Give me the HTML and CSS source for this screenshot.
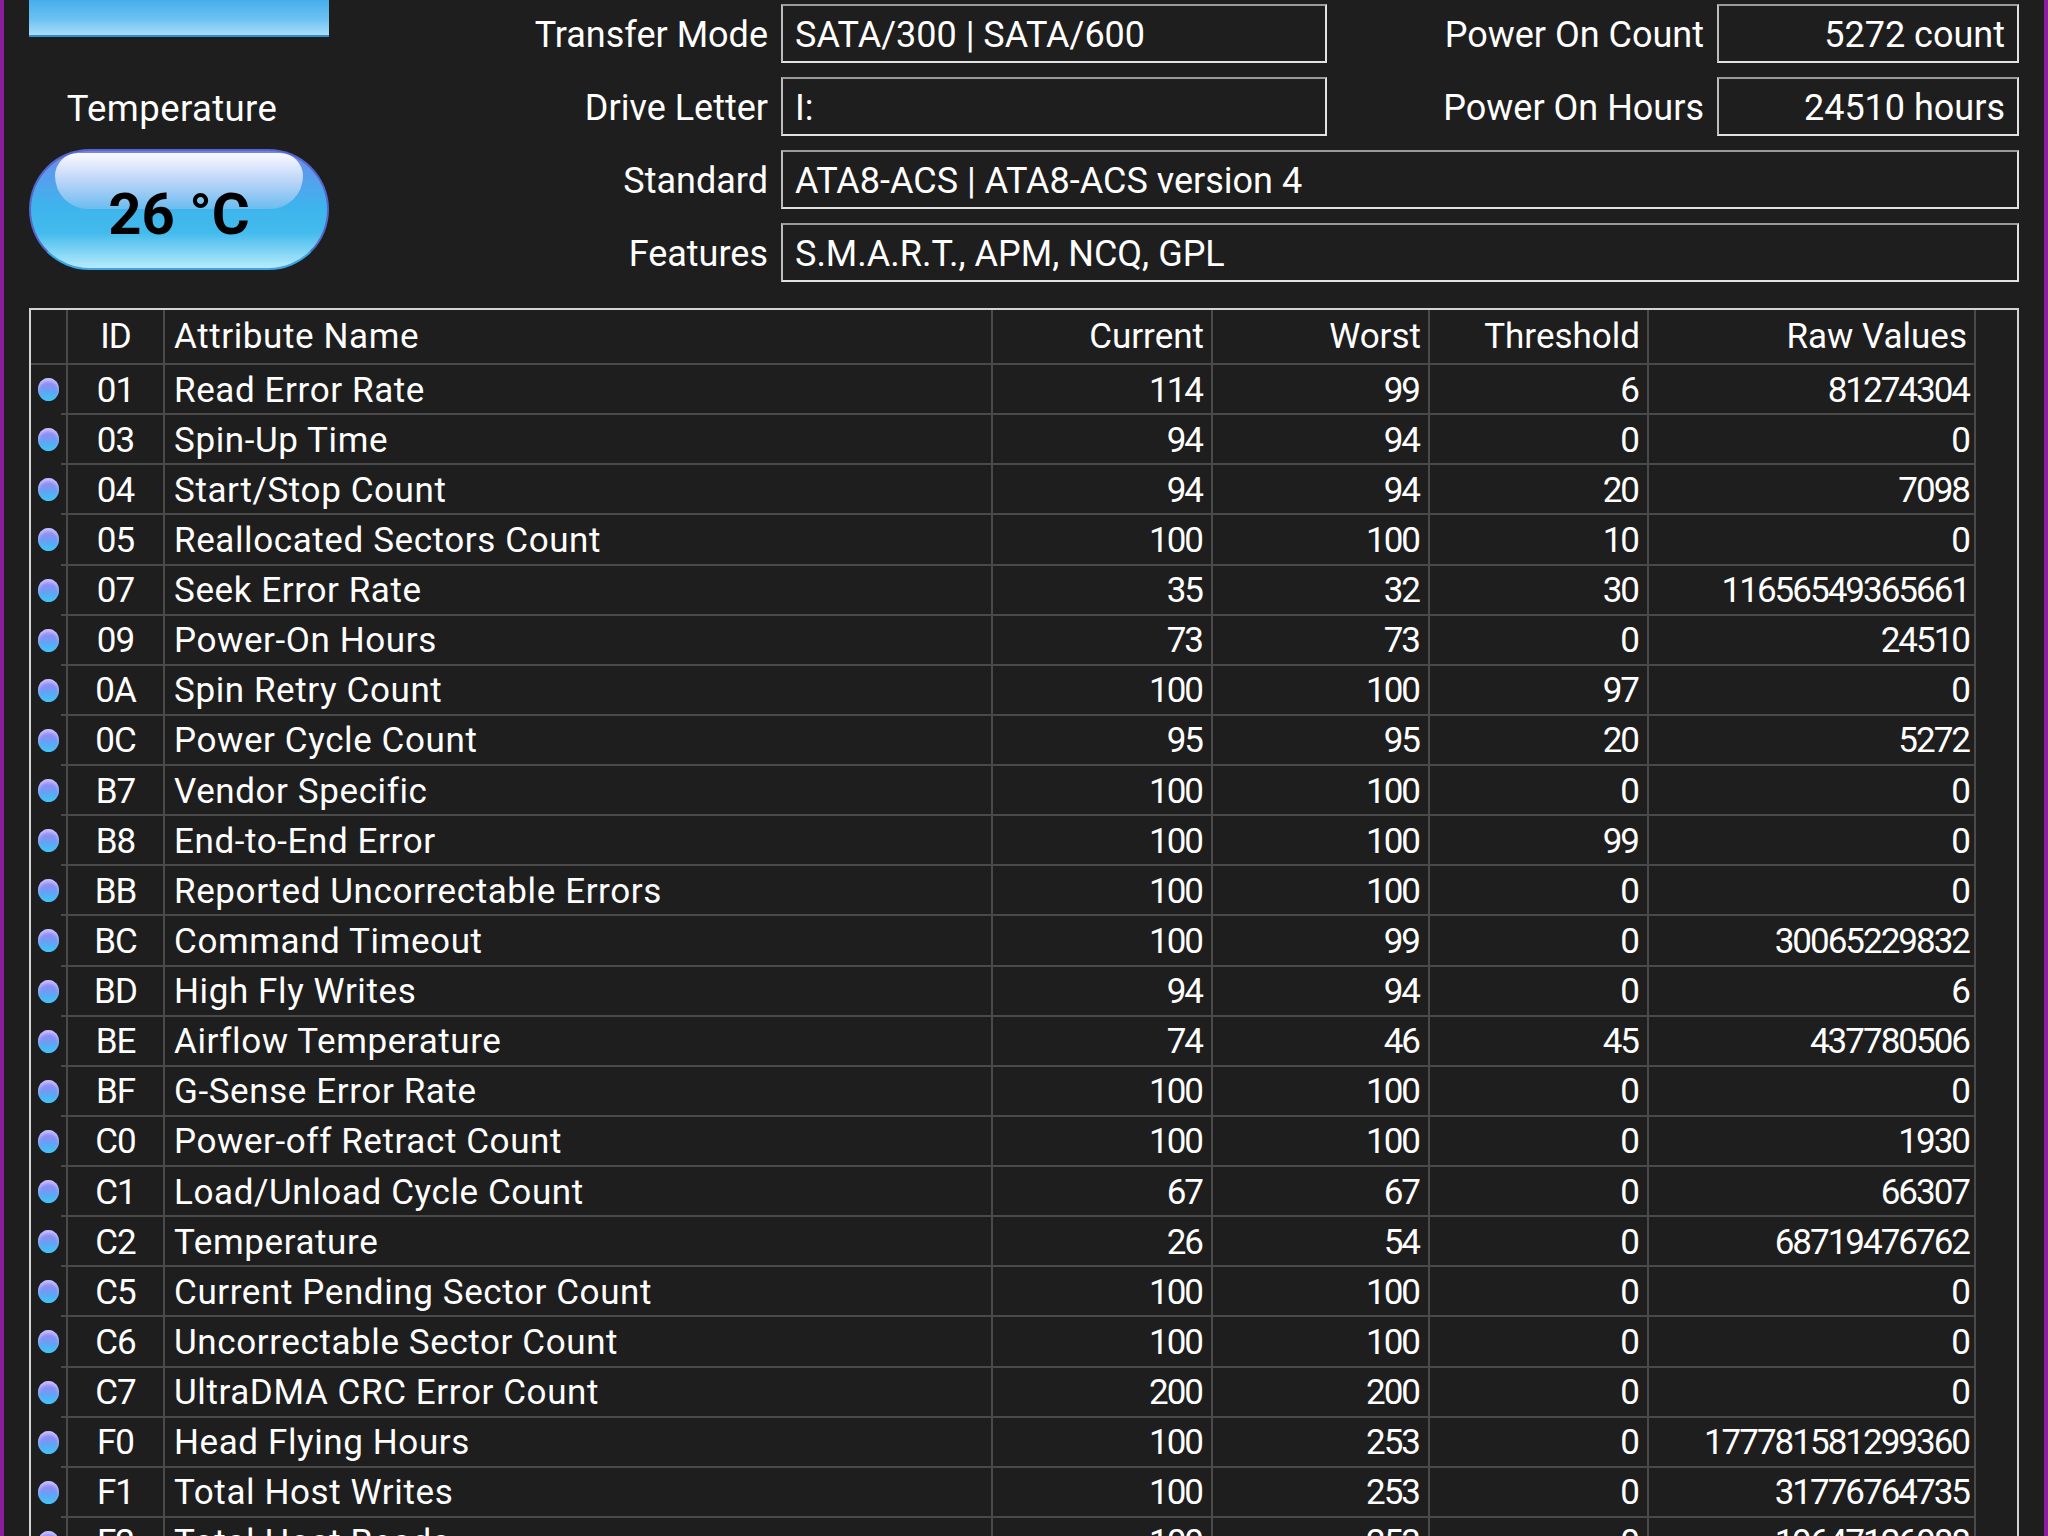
FILE: index.html
```html
<!DOCTYPE html>
<html lang="en">
<head>
    <meta charset="UTF-8">
    <meta name="viewport" content="width=device-width, initial-scale=1.0">
    <title>Disk Info</title>
    <link rel="stylesheet" href="styles.css">
</head>
<body>
    <div class="app">
        <div class="top">
            <div class="side">
                <div class="status-bar"></div>
                <div class="temp-label">Temperature</div>
                <div class="temp-pill">
                    <span class="gloss"></span>
                    <span class="temp-value">26 °C</span>
                </div>
            </div>

            <div class="info">
                <div class="label">Transfer Mode</div>
                <div class="field">SATA/300 | SATA/600</div>
                <div class="label">Power On Count</div>
                <div class="field right">5272 count</div>

                <div class="label">Drive Letter</div>
                <div class="field">I:</div>
                <div class="label">Power On Hours</div>
                <div class="field right">24510 hours</div>

                <div class="label">Standard</div>
                <div class="field wide">ATA8-ACS | ATA8-ACS version 4</div>

                <div class="label">Features</div>
                <div class="field wide">S.M.A.R.T., APM, NCQ, GPL</div>
            </div>
        </div>

        <div class="smart" id="smart">
            <div class="smart-row head">
                <div class="cell dot-cell"></div>
                <div class="cell id">ID</div>
                <div class="cell name">Attribute Name</div>
                <div class="cell num">Current</div>
                <div class="cell num">Worst</div>
                <div class="cell num">Threshold</div>
                <div class="cell num">Raw Values</div>
                <div class="cell filler"></div>
            </div>
        </div>
    </div>

    <script>
        const attributes = [
            ['01', 'Read Error Rate', 114, 99, 6, '81274304'],
            ['03', 'Spin-Up Time', 94, 94, 0, '0'],
            ['04', 'Start/Stop Count', 94, 94, 20, '7098'],
            ['05', 'Reallocated Sectors Count', 100, 100, 10, '0'],
            ['07', 'Seek Error Rate', 35, 32, 30, '11656549365661'],
            ['09', 'Power-On Hours', 73, 73, 0, '24510'],
            ['0A', 'Spin Retry Count', 100, 100, 97, '0'],
            ['0C', 'Power Cycle Count', 95, 95, 20, '5272'],
            ['B7', 'Vendor Specific', 100, 100, 0, '0'],
            ['B8', 'End-to-End Error', 100, 100, 99, '0'],
            ['BB', 'Reported Uncorrectable Errors', 100, 100, 0, '0'],
            ['BC', 'Command Timeout', 100, 99, 0, '30065229832'],
            ['BD', 'High Fly Writes', 94, 94, 0, '6'],
            ['BE', 'Airflow Temperature', 74, 46, 45, '437780506'],
            ['BF', 'G-Sense Error Rate', 100, 100, 0, '0'],
            ['C0', 'Power-off Retract Count', 100, 100, 0, '1930'],
            ['C1', 'Load/Unload Cycle Count', 67, 67, 0, '66307'],
            ['C2', 'Temperature', 26, 54, 0, '68719476762'],
            ['C5', 'Current Pending Sector Count', 100, 100, 0, '0'],
            ['C6', 'Uncorrectable Sector Count', 100, 100, 0, '0'],
            ['C7', 'UltraDMA CRC Error Count', 200, 200, 0, '0'],
            ['F0', 'Head Flying Hours', 100, 253, 0, '177781581299360'],
            ['F1', 'Total Host Writes', 100, 253, 0, '31776764735'],
            ['F2', 'Total Host Reads', 100, 253, 0, '19647126088']
        ];

        function renderAttributes() {
            const table = document.getElementById('smart');
            attributes.forEach(attr => {
                const row = document.createElement('div');
                row.className = 'smart-row';
                row.innerHTML = `
                    <div class="cell dot-cell"><span class="dot"></span></div>
                    <div class="cell id">${attr[0]}</div>
                    <div class="cell name">${attr[1]}</div>
                    <div class="cell num val">${attr[2]}</div>
                    <div class="cell num val">${attr[3]}</div>
                    <div class="cell num val">${attr[4]}</div>
                    <div class="cell num val raw">${attr[5]}</div>
                    <div class="cell filler"></div>
                `;
                table.appendChild(row);
            });
        }

        renderAttributes();
    </script>
</body>
</html>
```

FILE: styles.css
```css
html, body { height: 1536px; overflow: hidden; }
body { margin: 0; background-color: #1e1e1e; color: #fff; font-family: Roboto, "Liberation Sans", sans-serif; font-size: 35px; border-left: 4px solid #8a1c9e; border-right: 4px solid #8a1c9e; }
.app { padding: 0 25px; }

.top { display: flex; font-size: 36px; }
.side { width: 300px; flex: none; display: flex; flex-direction: column; }
.status-bar { height: 35px; border-bottom: 2px solid #2f8fd2; background: linear-gradient(#46aeec, #6cc2f2 55%, #a9def9); }
.temp-label { margin-top: 47px; padding-right: 14px; font-size: 36.5px; letter-spacing: 0.4px; line-height: 50px; text-align: center; }
.temp-pill { position: relative; margin-top: 15px; height: 121px; box-sizing: border-box; padding-top: 8px; border-radius: 61px; border: 2px solid #5566cc; border-bottom-color: #3ba4e4; background: linear-gradient(#7882e8 0%, #5d9aee 16%, #3db4ec 48%, #44bbed 70%, #b6ebfc 100%); display: flex; align-items: center; justify-content: center; }
.temp-pill .gloss { position: absolute; top: 2px; left: 24px; right: 24px; height: 56px; border-radius: 28px 28px 40px 40px; background: linear-gradient(rgba(255, 255, 255, 0.97), rgba(236, 240, 254, 0.8) 35%, rgba(190, 205, 245, 0.35)); }
.temp-value { position: relative; color: #000; font-weight: bold; font-size: 58px; line-height: 1; }

.info { display: grid; grid-template-columns: 452px 546px 390px 302px; grid-auto-rows: 59px; row-gap: 14px; padding-top: 4px; }
.label { padding: 4px 13px 0 0; text-align: right; line-height: 55px; }
.field { box-sizing: border-box; border: 2px solid; border-color: #9a9a9a #e2e2e2 #e2e2e2 #bcbcbc; padding: 3px 12px 0; line-height: 52px; white-space: nowrap; }
.field.right { text-align: right; }
.field.wide { grid-column: 2 / 5; }

.smart { margin-top: 26px; border: 2px solid #d4d4d4; }
.smart-row { display: grid; grid-template-columns: 37px 97px 828px 220px 217px 219px 327px 1fr; height: 50.13px; }
.smart-row.head { height: 55px; }
.cell { box-sizing: border-box; border-right: 2px solid #4a4a4a; border-bottom: 2px solid #4a4a4a; display: flex; align-items: center; white-space: nowrap; }
.smart-row:not(.head) .cell { padding-top: 2px; }
.cell.filler { border: none; }
.cell.id { justify-content: center; letter-spacing: -1px; }
.cell.name { padding-left: 9px; letter-spacing: 0.6px; }
.cell.num { justify-content: flex-end; padding-right: 7px; }
.cell.val { letter-spacing: -2px; padding-right: 9px; }
.cell.val.raw { padding-right: 5px; }
.smart-row:not(.head) .dot-cell { border-bottom: none; background: linear-gradient(#4a4a4a, #4a4a4a) right bottom / 5px 2px no-repeat; }
.dot-cell { justify-content: center; }
.dot { width: 21px; height: 23px; margin-top: -3px; border-radius: 50%; background: linear-gradient(#a89cf8 0%, #8c8ef4 30%, #5ea6f4 62%, #3ec6f8 100%); box-shadow: inset 0 3px 3px rgba(220, 215, 255, 0.6); }
```
